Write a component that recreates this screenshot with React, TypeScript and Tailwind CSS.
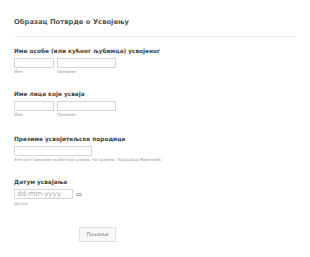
import React from 'react';

const Heading: React.FC<{ children: React.ReactNode; className?: string }> = ({ children, className }) => (
  <div className={`text-[5.8px] leading-[8px] font-bold text-[#474747] ${className ?? ''}`}>{children}</div>
);

const Sub: React.FC<{ children: React.ReactNode; className?: string }> = ({ children, className }) => (
  <div className={`text-[4.1px] leading-[5px] text-[#999] ${className ?? ''}`}>{children}</div>
);

const Field: React.FC<{ w: string }> = ({ w }) => (
  <div className={`${w} h-[10px] border border-[#d6d6d6] bg-white`} />
);

export default function App() {
  return (
    <div className="w-[310px] h-[257px] bg-white pt-[17px] px-[14px] font-['DejaVu_Sans',sans-serif]">
      <h1 className="text-[6.8px] leading-[10px] font-semibold text-[#555]">Образац Потврде о Усвојењу</h1>
      <div className="mt-[9px] h-px w-[281px] bg-[#f1f1f1]" />

      <Heading className="mt-[10px]">Име особе (или кућног љубимца) усвојеног</Heading>
      <div className="mt-[3px] flex gap-[3px]">
        <div>
          <Field w="w-[40px]" />
          <Sub className="mt-px">Име</Sub>
        </div>
        <div>
          <Field w="w-[59px]" />
          <Sub className="mt-px">Презиме</Sub>
        </div>
      </div>

      <Heading className="mt-[16px]">Име лица које усваја</Heading>
      <div className="mt-[3px] flex gap-[3px]">
        <div>
          <Field w="w-[40px]" />
          <Sub className="mt-px">Име</Sub>
        </div>
        <div>
          <Field w="w-[59px]" />
          <Sub className="mt-px">Презиме</Sub>
        </div>
      </div>

      <Heading className="mt-[18px]">Презиме усвојитељске породице</Heading>
      <div className="mt-[3px]">
        <Field w="w-[78px]" />
        <Sub className="mt-px">Унесите презиме особе која усваја, на пример: Породица Марковић</Sub>
      </div>

      <Heading className="mt-[16px]">Датум усвајања</Heading>
      <div className="mt-[3px] flex items-center gap-[3px]">
        <div className="w-[59px] h-[10px] border border-[#d6d6d6] bg-white flex items-center px-[2px] text-[7px] text-[#aaa]">
          dd-mm-yyyy
        </div>
        <div className="w-[6px] h-[3px] rounded-[1px] border border-[#aaa]" />
      </div>
      <Sub className="mt-[2px]">Датум</Sub>

      <button className="mt-[21px] ml-[65px] w-[37px] h-[15px] border border-[#e0e0e0] bg-[#f8f8f8] text-[5px] text-[#777] flex items-center justify-center">
        Пошаљи
      </button>
    </div>
  );
}
